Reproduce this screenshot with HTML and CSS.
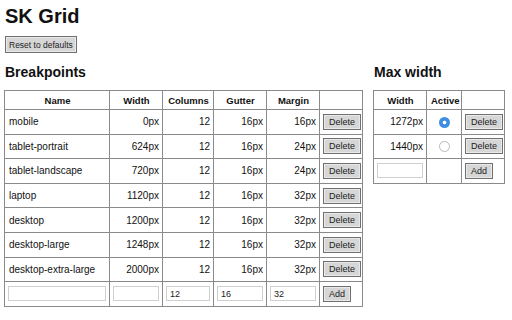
FILE: index.html
```html
<!DOCTYPE html>
<html>
<head>
<meta charset="utf-8">
<link rel="stylesheet" href="styles.css">
</head>
<body>
<h1 class="title">SK Grid</h1>
<button class="btn btn-reset">Reset to defaults</button>
<div class="sections">
  <section class="section">
    <h2 class="heading">Breakpoints</h2>
    <table class="grid grid-bp">
      <colgroup>
        <col class="c-name"><col class="c-num"><col class="c-num2"><col class="c-num"><col class="c-num"><col class="c-act">
      </colgroup>
      <thead>
        <tr><th>Name</th><th>Width</th><th>Columns</th><th>Gutter</th><th>Margin</th><th></th></tr>
      </thead>
      <tbody>
        <tr><td>mobile</td><td class="num">0px</td><td class="num">12</td><td class="num">16px</td><td class="num">16px</td><td class="act"><button class="btn">Delete</button></td></tr>
        <tr><td>tablet-portrait</td><td class="num">624px</td><td class="num">12</td><td class="num">16px</td><td class="num">24px</td><td class="act"><button class="btn">Delete</button></td></tr>
        <tr><td>tablet-landscape</td><td class="num">720px</td><td class="num">12</td><td class="num">16px</td><td class="num">24px</td><td class="act"><button class="btn">Delete</button></td></tr>
        <tr><td>laptop</td><td class="num">1120px</td><td class="num">12</td><td class="num">16px</td><td class="num">32px</td><td class="act"><button class="btn">Delete</button></td></tr>
        <tr><td>desktop</td><td class="num">1200px</td><td class="num">12</td><td class="num">16px</td><td class="num">32px</td><td class="act"><button class="btn">Delete</button></td></tr>
        <tr><td>desktop-large</td><td class="num">1248px</td><td class="num">12</td><td class="num">16px</td><td class="num">32px</td><td class="act"><button class="btn">Delete</button></td></tr>
        <tr><td>desktop-extra-large</td><td class="num">2000px</td><td class="num">12</td><td class="num">16px</td><td class="num">32px</td><td class="act"><button class="btn">Delete</button></td></tr>
        <tr class="input-row"><td><input class="field" type="text"></td><td><input class="field" type="text"></td><td><input class="field" type="text" value="12"></td><td><input class="field" type="text" value="16"></td><td><input class="field" type="text" value="32"></td><td class="act"><button class="btn">Add</button></td></tr>
      </tbody>
    </table>
  </section>
  <section class="section">
    <h2 class="heading">Max width</h2>
    <table class="grid grid-mw">
      <colgroup>
        <col class="c-num"><col class="c-active"><col class="c-act">
      </colgroup>
      <thead>
        <tr><th>Width</th><th>Active</th><th></th></tr>
      </thead>
      <tbody>
        <tr><td class="num">1272px</td><td class="center"><span class="radio radio-on"></span></td><td class="act"><button class="btn">Delete</button></td></tr>
        <tr><td class="num">1440px</td><td class="center"><span class="radio"></span></td><td class="act"><button class="btn">Delete</button></td></tr>
        <tr class="input-row"><td><input class="field" type="text"></td><td></td><td class="act"><button class="btn">Add</button></td></tr>
      </tbody>
    </table>
  </section>
</div>
</body>
</html>
```

FILE: styles.css
```css
html, body {
  margin: 0;
  padding: 0;
  background: #ffffff;
}
body {
  padding: 0 4px;
  font-family: "Liberation Sans", Arial, sans-serif;
  color: #111;
}
.title {
  margin: 4px 0 0 1px;
  font-size: 20px;
  line-height: 24px;
  font-weight: bold;
}
.btn {
  font-family: "Liberation Sans", Arial, sans-serif;
  font-size: 9px;
  color: #222;
  background: #d6d6d6;
  border: 1px solid #707070;
  box-shadow: inset 0 0 0 1px #e9e9e9;
  border-radius: 0;
  padding: 0 5px;
  height: 16px;
  line-height: 14px;
  margin: 0;
}
.btn-reset {
  display: block;
  margin: 8px 0 0 1px;
  height: 17px;
  padding: 0 3px;
  font-size: 8.5px;
}
.sections {
  display: flex;
  align-items: flex-start;
  gap: 10px;
  margin-top: 10px;
}
.heading {
  margin: 0 0 9px 1px;
  font-size: 14px;
  line-height: 18px;
  font-weight: bold;
}
.grid {
  border-collapse: collapse;
  table-layout: fixed;
  border: 1px solid #8a8a8a;
  font-size: 10px;
}
.grid th, .grid td {
  border: 1px solid #8a8a8a;
  padding: 0 3px 0 4px;
  white-space: nowrap;
  overflow: hidden;
}
.grid th {
  height: 18px;
  font-weight: bold;
  text-align: center;
  font-size: 9.5px;
}
.grid td {
  height: 23.6px;
}
.grid-bp { width: 357px; }
.grid-mw { width: 131px; margin-top: 1px; }
.c-name { width: 105px; }
.c-num { width: 53px; }
.c-num2 { width: 51px; }
.c-act { width: 43px; }
.c-active { width: 35px; }
.num { text-align: right; }
.center { text-align: center; }
.grid td.act { padding: 0 3px; }
.grid .input-row td { padding: 0 3px; }
.field {
  display: block;
  box-sizing: border-box;
  width: 100%;
  height: 15px;
  border: 1px solid #cfcfcf;
  font-family: "Liberation Sans", Arial, sans-serif;
  font-size: 9px;
  padding: 0 3px;
  margin: 0;
  color: #222;
  outline: none;
}
.radio {
  display: inline-block;
  width: 11px;
  height: 11px;
  box-sizing: border-box;
  border-radius: 50%;
  border: 1px solid #b9b9b9;
  background: #fff;
  vertical-align: middle;
}
.radio-on {
  border: none;
  background: radial-gradient(circle, #ffffff 0 1.6px, #3f8de3 2.2px);
}
```
